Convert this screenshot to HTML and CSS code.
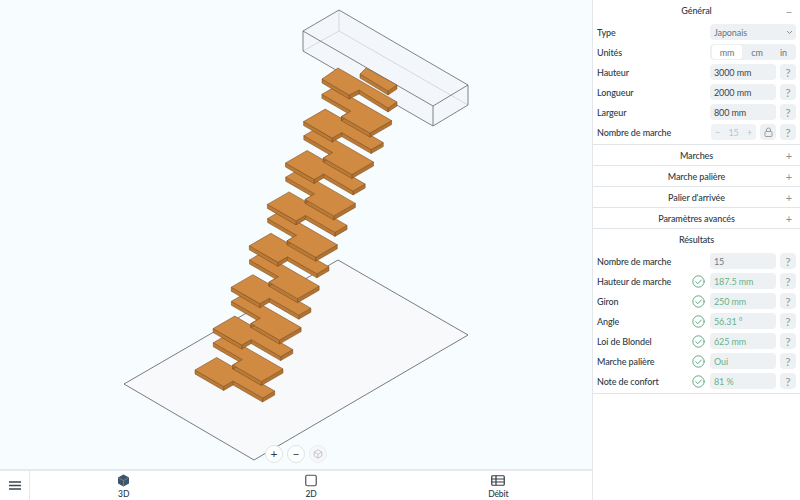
FILE: index.html
```html
<!DOCTYPE html>
<html lang="fr">
<head>
<meta charset="utf-8">
<title>Escalier</title>
<link rel="stylesheet" href="styles.css">
</head>
<body>
<div class="app">
  <div class="main">
    <div class="canvas">
      <svg class="scene" width="592" height="469" viewBox="0 0 592 469">
        <defs>
          <g id="step-a">
            <polygon class="side-r" points="67.55,28 79.67,21 79.67,25 67.55,32"/>
            <polygon class="side-l" points="38.1,11 67.55,28 67.55,32 38.1,15"/>
            <polygon class="side-r" points="28.6,16.5 38.1,11 38.1,15 28.6,20.500"/>
            <polygon class="side-l" points="0,0 28.6,16.5 28.6,20.500 0,4"/>
            <polygon class="face" points="0,0 21.65,-12.5 79.67,21 67.55,28 38.1,11 28.6,16.5"/>
          </g>
          <g id="step-b">
            <polygon class="side-r" points="-21.65,12.5 0,0 0,4 -21.65,16.500"/>
            <polygon class="side-l" points="-50.25,-4 -21.65,12.5 -21.65,16.500 -50.25,0"/>
            <polygon class="side-r" points="-50.25,-4 -40.7,-9.5 -40.7,-5.500 -50.25,0"/>
            <polygon class="side-l" points="-69.7,-26.25 -40.7,-9.5 -40.7,-5.500 -69.7,-22.25"/>
            <polygon class="face" points="0,0 -21.65,12.5 -50.25,-4 -40.7,-9.5 -69.7,-26.25 -57.6,-33.25"/>
          </g>
        </defs>
        <polygon class="floor" points="124,384 338,260 468,335 254,460"/>
        <g class="box-hidden">
          <line x1="339" y1="10" x2="339" y2="31"/>
          <line x1="339" y1="31" x2="303" y2="51"/>
          <line x1="339" y1="31" x2="468" y2="105"/>
        </g>
        <polygon class="box-fill" points="303,31 339,10 468,85 468,105 433,126 303,51"/>
        <g class="box-edge">
          <polygon points="303,31 339,10 468,85 433,106"/>
          <line x1="303" y1="31" x2="303" y2="51"/>
          <line x1="468" y1="85" x2="468" y2="105"/>
          <line x1="433" y1="106" x2="433" y2="126"/>
          <polyline points="303,51 433,126 468,105"/>
        </g>
        <use href="#step-a" x="195" y="370"/>
        <use href="#step-b" x="283" y="369"/>
        <use href="#step-a" x="213.1" y="328.6"/>
        <use href="#step-b" x="301.1" y="327.6"/>
        <use href="#step-a" x="231.2" y="287.2"/>
        <use href="#step-b" x="319.2" y="286.2"/>
        <use href="#step-a" x="249.3" y="245.8"/>
        <use href="#step-b" x="337.3" y="244.8"/>
        <use href="#step-a" x="267.4" y="204.4"/>
        <use href="#step-b" x="355.4" y="203.4"/>
        <use href="#step-a" x="285.5" y="163"/>
        <use href="#step-b" x="373.5" y="162"/>
        <use href="#step-a" x="303.6" y="121.6"/>
        <use href="#step-b" x="391.6" y="120.6"/>
        <g>
          <polygon class="side-r" points="388,108 397,102 397,106 388,112"/>
          <polygon class="side-l" points="359,90 388,108 388,112 359,94"/>
          <polygon class="side-r" points="349,95 359,90 359,94 349,99"/>
          <polygon class="side-l" points="322,79 349,95 349,99 322,83"/>
          <polygon class="face" points="322,79 338,68 397,102 388,108 359,90 349,95"/>
        </g>
        <g>
          <polygon class="side-r" points="388,91 397,85 397,89 388,95"/>
          <polygon class="side-l" points="360,74 388,91 388,95 360,78"/>
          <polygon class="face" points="360,74 366,68 397,85 388,91"/>
        </g>
      </svg>
      <div class="zoom-tools">
        <button class="zoom-btn">+</button>
        <button class="zoom-btn">−</button>
        <button class="zoom-btn off">
          <svg width="10" height="10" viewBox="0 0 10 10"><path class="cube-line" d="M5 .8 8.8 3v4L5 9.2 1.2 7V3zM1.2 3 5 5.2 8.8 3M5 5.2v4"/></svg>
        </button>
      </div>
    </div>
    <nav class="bar">
      <div class="menu">
        <svg width="12" height="9" viewBox="0 0 12 9"><path class="menu-line" d="M0 1h12M0 4.500h12M0 8h12"/></svg>
      </div>
      <div class="tab">
        <svg width="13" height="13" viewBox="0 0 13 13"><path class="cube-solid" d="M6.500 .5 12 3.500v6l-5.500 3-5.500-3v-6z"/><path class="cube-gap" d="M1.500 3.800 6.500 6.500l5-2.700M6.500 6.500v6"/></svg>
        <span>3D</span>
      </div>
      <div class="tab">
        <svg width="12" height="12" viewBox="0 0 12 12"><rect class="square" x=".75" y=".75" width="10.500" height="10.500" rx="1.500"/></svg>
        <span>2D</span>
      </div>
      <div class="tab">
        <svg width="14" height="12" viewBox="0 0 14 12"><rect class="table-line" x=".75" y="1.250" width="12.500" height="9.500" rx="1"/><path class="table-line" d="M.75 4.500h12.500M.75 7.500h12.500M5 1.250v9.500"/></svg>
        <span>Débit</span>
      </div>
    </nav>
  </div>
  <aside class="panel">
    <section class="group">
      <header class="head first">Général<i class="sign">−</i></header>
      <div class="row"><label>Type</label><div class="field wide">Japonais<svg class="chev" width="7" height="5" viewBox="0 0 7 5"><path d="M1 1l2.500 2.500L6 1"/></svg></div></div>
      <div class="row"><label>Unités</label><div class="units"><span class="unit on">mm</span><span class="unit cm">cm</span><span class="unit in">in</span></div></div>
      <div class="row"><label>Hauteur</label><div class="field dark">3000 mm</div><div class="help">?</div></div>
      <div class="row"><label>Longueur</label><div class="field dark">2000 mm</div><div class="help">?</div></div>
      <div class="row"><label>Largeur</label><div class="field dark">800 mm</div><div class="help">?</div></div>
      <div class="row"><label>Nombre de marche</label>
        <div class="stepper"><span>−</span><span>15</span><span>+</span></div>
        <div class="help lock"><svg width="9" height="10" viewBox="0 0 9 10"><rect class="lock-line" x="1" y="4.500" width="7" height="5" rx="1"/><path class="lock-line" d="M2.500 4.500V3a2 2 0 0 1 4 0v1.500"/></svg></div>
        <div class="help">?</div>
      </div>
    </section>
    <header class="fold">Marches<i class="sign">+</i></header>
    <header class="fold">Marche palière<i class="sign">+</i></header>
    <header class="fold">Palier d'arrivée<i class="sign">+</i></header>
    <header class="fold">Paramètres avancés<i class="sign">+</i></header>
    <section class="group results">
      <header class="head res">Résultats</header>
      <div class="row"><label>Nombre de marche</label><div class="field plain">15</div><div class="help">?</div></div>
      <div class="row"><label>Hauteur de marche</label><svg class="ok" width="13" height="13" viewBox="0 0 13 13"><circle cx="6.500" cy="6.500" r="5.700"/><path d="M3.800 6.700l2 2 3.600-3.800"/></svg><div class="field good">187.5 mm</div><div class="help">?</div></div>
      <div class="row"><label>Giron</label><svg class="ok" width="13" height="13" viewBox="0 0 13 13"><circle cx="6.500" cy="6.500" r="5.700"/><path d="M3.800 6.700l2 2 3.600-3.800"/></svg><div class="field good">250 mm</div><div class="help">?</div></div>
      <div class="row"><label>Angle</label><svg class="ok" width="13" height="13" viewBox="0 0 13 13"><circle cx="6.500" cy="6.500" r="5.700"/><path d="M3.800 6.700l2 2 3.600-3.800"/></svg><div class="field good">56.31 °</div><div class="help">?</div></div>
      <div class="row"><label>Loi de Blondel</label><svg class="ok" width="13" height="13" viewBox="0 0 13 13"><circle cx="6.500" cy="6.500" r="5.700"/><path d="M3.800 6.700l2 2 3.600-3.800"/></svg><div class="field good">625 mm</div><div class="help">?</div></div>
      <div class="row"><label>Marche palière</label><svg class="ok" width="13" height="13" viewBox="0 0 13 13"><circle cx="6.500" cy="6.500" r="5.700"/><path d="M3.800 6.700l2 2 3.600-3.800"/></svg><div class="field good">Oui</div><div class="help">?</div></div>
      <div class="row"><label>Note de confort</label><svg class="ok" width="13" height="13" viewBox="0 0 13 13"><circle cx="6.500" cy="6.500" r="5.700"/><path d="M3.800 6.700l2 2 3.600-3.800"/></svg><div class="field good">81 %</div><div class="help">?</div></div>
    </section>
  </aside>
</div>
</body>
</html>
```
FILE: styles.css
```css
* { box-sizing: border-box; }
html, body { margin: 0; height: 100%; }
body { font-family: Lato, "Liberation Sans", sans-serif; font-size: 9px; letter-spacing: -.1px; color: #2c3a47; background: #fff; overflow: hidden; }
.app { display: flex; width: 800px; height: 500px; }
.main { width: 592px; display: flex; flex-direction: column; }
.canvas { position: relative; height: 469px; background: #f7fcff; }
.scene { display: block; }
.floor { fill: #f8f9fa; stroke: #565c62; stroke-width: .8; }
.box-hidden line { stroke: #c9cdd1; stroke-width: .8; }
.box-fill { fill: rgba(225, 230, 235, .18); }
.box-edge polygon, .box-edge polyline { fill: none; stroke: #5f656b; stroke-width: .8; }
.box-edge line { stroke: #5f656b; stroke-width: .8; }
.face { fill: #d18a41; stroke: #7d5225; stroke-width: .6; stroke-linejoin: round; }
.side-l, .side-r { stroke: #70491f; stroke-width: .5; stroke-linejoin: round; }
.side-l { fill: #bd7a35; }
.side-r { fill: #b37230; }
.zoom-tools { position: absolute; left: 265px; top: 445px; display: flex; gap: 4px; align-items: center; }
.zoom-btn { width: 18px; height: 18px; padding: 0; border: 1px solid #dfe3e6; border-radius: 50%; background: #fff; color: #2c3a47; font: 12px/1 Lato, sans-serif; display: flex; align-items: center; justify-content: center; }
.zoom-btn.off { background: #f5f7f8; border-color: #eceef0; }
.cube-line { fill: none; stroke: #b8bec3; stroke-width: .8; }
.bar { height: 31px; display: flex; border-top: 2px solid #e6e9eb; background: #fff; }
.menu { width: 30px; display: flex; align-items: center; justify-content: center; border-right: 1px solid #e6e9eb; }
.menu-line { stroke: #3a4650; stroke-width: 1.300; fill: none; }
.tab { flex: 1; display: flex; flex-direction: column; align-items: center; justify-content: flex-start; padding-top: 3px; gap: 2px; font-size: 8.500px; font-weight: 500; line-height: 11px; }
.tab svg { display: block; height: 13px; }
.cube-solid { fill: #3e5468; }
.cube-gap { fill: none; stroke: #7d8d9c; stroke-width: .8; }
.square { fill: none; stroke: #4a525a; stroke-width: 1.200; }
.table-line { fill: none; stroke: #333c44; stroke-width: 1.200; }
.panel { width: 208px; border-left: 1px solid #e4e7ea; background: #fff; }
.group { border-bottom: 1px solid #e2e5e8; padding-bottom: 2px; }
.head { position: relative; height: 21px; display: flex; align-items: center; justify-content: center; font-size: 9px; font-weight: 500; }
.head.first { height: 22px; padding-bottom: 2px; }
.fold { position: relative; height: 21px; display: flex; align-items: center; justify-content: center; font-size: 9px; font-weight: 500; border-bottom: 1px solid #e2e5e8; }
.sign { position: absolute; right: 6px; top: 50%; transform: translateY(-50%); width: 10px; text-align: center; font-style: normal; font-weight: 400; font-size: 11px; color: #8a939a; }
.row { height: 20px; display: flex; align-items: center; padding: 0 4px; gap: 4px; }
.results .row:first-of-type { margin-top: 1px; }
.row label { font-weight: 500; margin-right: auto; white-space: nowrap; padding-top: 1px; }
.field { width: 66px; height: 16px; border-radius: 4px; background: #eef1f3; display: flex; align-items: center; padding: 0 4px; color: #3a4650; white-space: nowrap; font-size: 9px; }
.field.wide { width: 86px; justify-content: space-between; padding-right: 3px; color: #6a747c; }
.field.plain { color: #6f7a82; }
.field.good { color: #68b18c; }
.chev { fill: none; stroke: #7e878e; stroke-width: .9; }
.units { width: 86px; height: 16px; background: #eef1f3; border-radius: 4px; display: flex; padding: 1px 1px 1px 2px; font-size: 9px; }
.unit { display: flex; align-items: center; justify-content: center; color: #6a747c; }
.unit.on { width: 30px; background: #fff; border-radius: 3px; }
.unit.cm { width: 30px; }
.unit.in { width: 23px; }
.help { width: 16px; height: 16px; border-radius: 4px; background: #eef1f3; color: #8e969c; font-size: 12px; display: flex; align-items: center; justify-content: center; flex: none; }
.stepper { width: 45px; height: 16px; border-radius: 4px; background: #f0f3f6; color: #bcc3c8; display: flex; align-items: center; justify-content: space-between; padding: 0 4px; font-size: 9px; }
.lock-line { fill: none; stroke: #8e969c; stroke-width: .9; }
.ok { flex: none; fill: none; stroke: #4ea377; stroke-width: .9; stroke-linecap: round; stroke-linejoin: round; margin-right: 1px; }
```
